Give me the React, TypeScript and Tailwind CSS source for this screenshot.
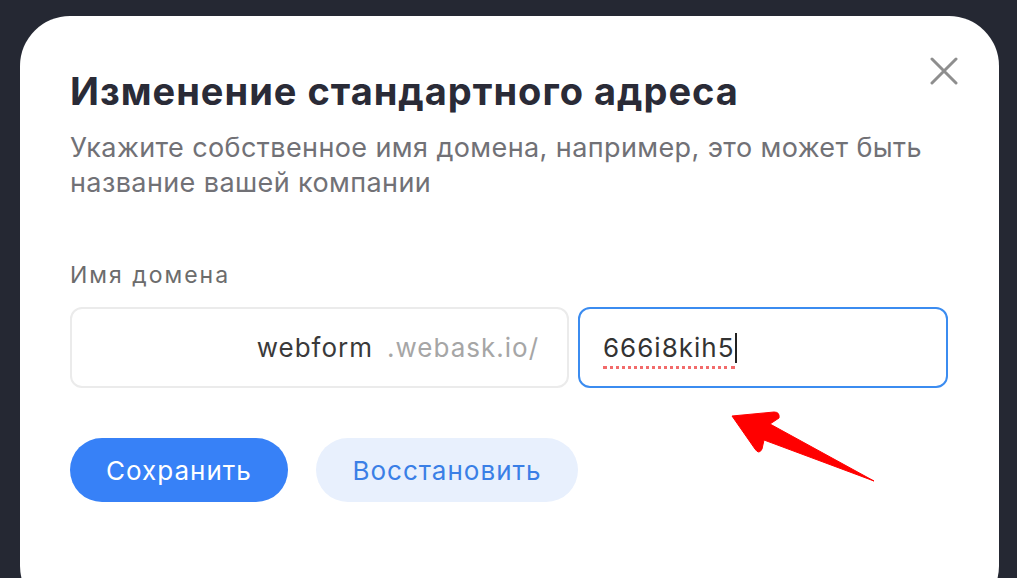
import React from "react";

export default function App() {
  return (
    <div
      className="relative w-[1017px] h-[578px] overflow-hidden bg-[#252833] pt-4 pl-5 pr-[18px]"
      style={{ fontFamily: "Inter, 'Noto Sans', sans-serif" }}
    >
      <div className="relative h-[600px] w-full rounded-[50px] bg-white pl-[50px] pr-[50px] pt-[52px]">
        <button className="absolute right-[41px] top-[41px] flex h-[28px] w-[28px] items-center justify-center text-[#8e8e8e]">
          <svg width="28" height="28" viewBox="0 0 28 28" fill="none" stroke="currentColor" strokeWidth="3" strokeLinecap="round">
            <path d="M2 2 L26 26 M26 2 L2 26" />
          </svg>
        </button>
        <h1 className="text-[38px] leading-[46px] font-bold text-[#2a2b37] tracking-[1px]">
          Изменение стандартного адреса
        </h1>
        <p className="mt-[16px] text-[27px] leading-[35px] text-[#717176] tracking-[0.4px]">
          Укажите собственное имя домена, например, это может быть
          <br />
          название вашей компании
        </p>
        <div className="mt-[60px] text-[23px] leading-[30px] text-[#6c6c6c] tracking-[2px]">Имя домена</div>
        <div className="mt-[17px] flex gap-[9px]">
          <div className="flex h-[81px] w-[499px] items-center justify-end rounded-[12px] border-2 border-[#ebebeb] pr-[28px] text-[26px] tracking-[1px]">
            <span className="text-[#3a3a3a]">webform</span>
            <span className="ml-[14px] text-[#a6a6a6]">.webask.io/</span>
          </div>
          <div className="flex h-[81px] w-[370px] items-center rounded-[12px] border-2 border-[#3b8cf0] pl-[23px] text-[26px] tracking-[1px] text-[#333]">
            <span className="relative">
              666i8kih5
              <span className="absolute left-0 right-0 bottom-[-2px] border-b-[3px] border-dotted border-[#f26b6b]" />
            </span>
            <span className="h-[30px] w-[2px] bg-[#222]" />
          </div>
        </div>
        <div className="mt-[50px] flex gap-[28px]">
          <button className="h-[64px] w-[218px] rounded-full bg-[#3781f7] text-[26px] tracking-[1px] text-white">
            Сохранить
          </button>
          <button className="h-[64px] w-[262px] rounded-full bg-[#e8f0fd] text-[26px] tracking-[1px] text-[#3a7fe6]">
            Восстановить
          </button>
        </div>
      </div>
      <svg className="absolute left-0 top-0" width="1017" height="578" viewBox="0 0 1017 578">
        <path
          d="M732 416 L774 412 Q780 412 779 418 L770 424 L874 481 L764 440 L762 449 Q759 455 755 449 Z"
          fill="#ff0000"
          stroke="#ff0000"
          strokeWidth="1"
          strokeLinejoin="round"
        />
      </svg>
    </div>
  );
}
